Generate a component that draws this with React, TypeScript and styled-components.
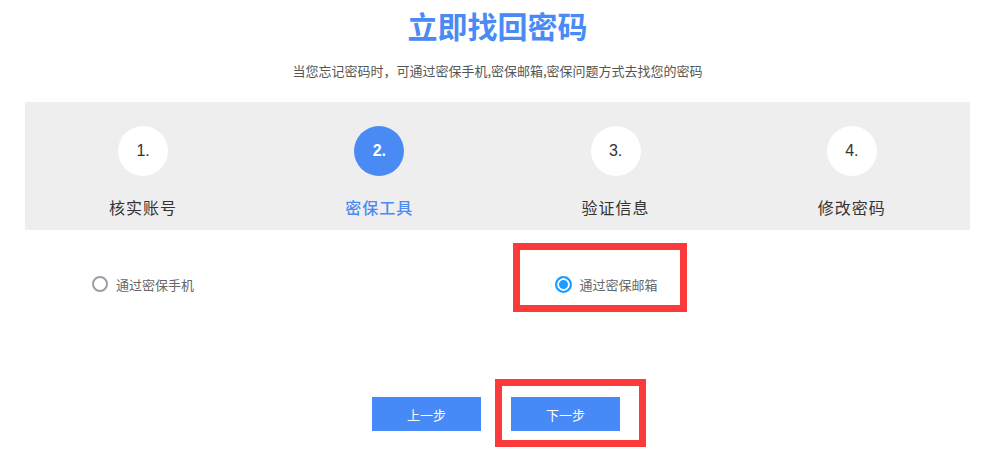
import React from "react"
import styled, { createGlobalStyle } from "styled-components"

const GlobalStyle = createGlobalStyle`
  html, body {
    margin: 0;
    padding: 0;
    background: #ffffff;
    font-family: "Liberation Sans", "Noto Sans CJK SC", sans-serif;
  }
`

const Page = styled.div`
  position: relative;
  width: 999px;
  height: 458px;
  padding: 0 29px 0 25px;
  box-sizing: border-box;
`

const Title = styled.h1`
  margin: 0;
  height: 50px;
  line-height: 50px;
  text-align: center;
  font-size: 30px;
  font-weight: 700;
  color: #4a8af4;
  font-family: "Noto Sans CJK SC", sans-serif;
`

const Subtitle = styled.p`
  margin: 11px 0 0;
  line-height: 20px;
  text-align: center;
  font-size: 13px;
  color: #555555;
  font-family: "Noto Sans CJK SC", sans-serif;
`

const StepBar = styled.div`
  margin-top: 21px;
  height: 128px;
  background: #eeeeee;
  display: grid;
  grid-template-columns: repeat(4, 1fr);
  box-sizing: border-box;
  padding-top: 24px;
`

const Step = styled.div`
  display: flex;
  flex-direction: column;
  align-items: center;
`

const Circle = styled.div<{ $active: boolean }>`
  width: 50px;
  height: 50px;
  border-radius: 50%;
  display: flex;
  align-items: center;
  justify-content: center;
  background: ${(p) => (p.$active ? "#4a8af5" : "#ffffff")};
  color: ${(p) => (p.$active ? "#ffffff" : "#333333")};
  font-weight: ${(p) => (p.$active ? 700 : 400)};
  font-size: 16px;
  font-family: "Liberation Sans", sans-serif;
`

const StepLabel = styled.div<{ $active: boolean }>`
  margin-top: 19px;
  line-height: 24px;
  font-size: 16px;
  letter-spacing: 1px;
  font-family: "Noto Sans CJK SC", sans-serif;
  color: ${(p) => (p.$active ? "#4a8af4" : "#333333")};
  font-weight: ${(p) => (p.$active ? 500 : 400)};
`

const Options = styled.div`
  margin-top: 39px;
  display: grid;
  grid-template-columns: 1fr 1fr;
  height: 30px;
`

const Option = styled.label<{ $indent: number }>`
  display: flex;
  align-items: center;
  gap: 8px;
  padding-left: ${(p) => p.$indent}px;
  font-size: 13px;
  color: #666666;
  font-family: "Noto Sans CJK SC", sans-serif;
`

const Radio = styled.span<{ $checked: boolean }>`
  width: ${(p) => (p.$checked ? 17 : 16)}px;
  height: ${(p) => (p.$checked ? 17 : 16)}px;
  border-radius: 50%;
  box-sizing: border-box;
  border: 2px solid ${(p) => (p.$checked ? "#1e9bff" : "#9aa0a8")};
  background: ${(p) => (p.$checked ? "#1e9bff" : "#ffffff")};
  box-shadow: ${(p) => (p.$checked ? "inset 0 0 0 2px #ffffff" : "none")};
`

const Actions = styled.div`
  margin-top: 98px;
  padding-right: 3px;
  display: flex;
  justify-content: center;
  gap: 30px;
`

const Button = styled.button`
  width: 109px;
  height: 34px;
  border: none;
  background: #4789f6;
  color: #ffffff;
  font-size: 13px;
  font-family: "Noto Sans CJK SC", sans-serif;
  cursor: pointer;
`

const Highlight = styled.div<{ $x: number; $y: number; $w: number; $h: number }>`
  position: absolute;
  left: ${(p) => p.$x}px;
  top: ${(p) => p.$y}px;
  width: ${(p) => p.$w}px;
  height: ${(p) => p.$h}px;
  box-sizing: border-box;
  border: 7px solid #fd3a3b;
  pointer-events: none;
`

const steps = ["核实账号", "密保工具", "验证信息", "修改密码"]

export default function App() {
  return (
    <Page>
      <GlobalStyle />
      <Title>立即找回密码</Title>
      <Subtitle>当您忘记密码时，可通过密保手机,密保邮箱,密保问题方式去找您的密码</Subtitle>
      <StepBar>
        {steps.map((s, i) => (
          <Step key={s}>
            <Circle $active={i === 1}>{i + 1}.</Circle>
            <StepLabel $active={i === 1}>{s}</StepLabel>
          </Step>
        ))}
      </StepBar>
      <Options>
        <Option $indent={67}>
          <Radio $checked={false} />
          通过密保手机
        </Option>
        <Option $indent={57}>
          <Radio $checked={true} />
          通过密保邮箱
        </Option>
      </Options>
      <Actions>
        <Button>上一步</Button>
        <Button>下一步</Button>
      </Actions>
      <Highlight $x={513} $y={243} $w={174} $h={69} />
      <Highlight $x={495} $y={379} $w={151} $h={68} />
    </Page>
  )
}
